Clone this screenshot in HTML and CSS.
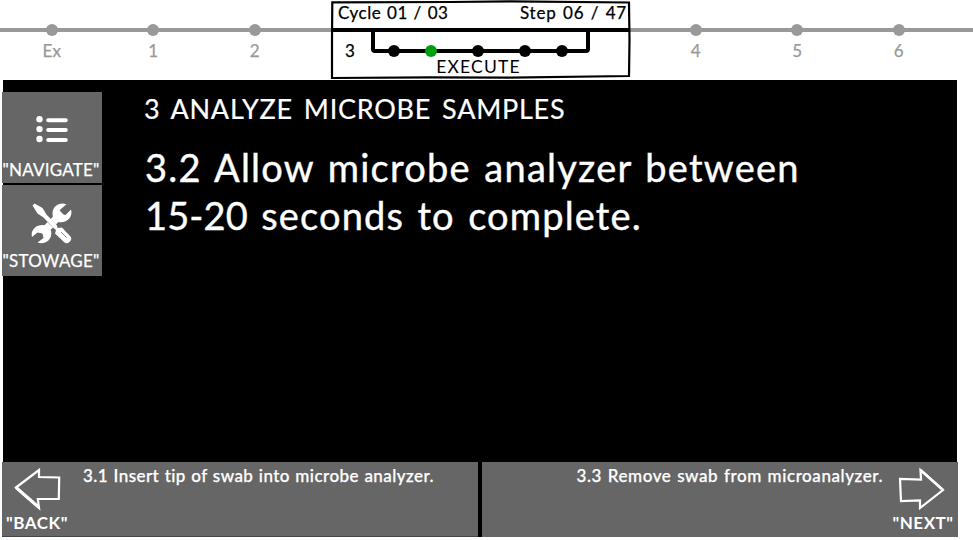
FILE: index.html
```html
<!DOCTYPE html>
<html lang="en">
<head>
<meta charset="utf-8">
<title>Analyze Microbe Samples</title>
<link rel="stylesheet" href="styles.css">
</head>
<body>
<header class="timeline">
  <ol class="steps steps-before">
    <li class="step"><i class="dot"></i><span>Ex</span></li>
    <li class="step"><i class="dot"></i><span>1</span></li>
    <li class="step"><i class="dot"></i><span>2</span></li>
  </ol>
  <section class="current">
    <svg class="sketch" viewBox="0 0 302 80" aria-hidden="true">
      <path d="M2.300 2.300L120 2L180 1.300L299 2.500L299.500 40L299 76L180 77.600L100 77.300L2 78L2 40Z" fill="#fff" stroke="#000" stroke-width="2.2"/>
      <path d="M2 30H299" stroke="#000" stroke-width="4"/>
      <path d="M43 30V49Q43 51 45 51H256Q258 51 258 49V30" fill="none" stroke="#000" stroke-width="4"/>
      <circle cx="64" cy="51" r="6"/>
      <circle cx="101" cy="51" r="6" fill="#009e0f"/>
      <circle cx="148" cy="51" r="6"/>
      <circle cx="195" cy="51" r="6"/>
      <circle cx="232" cy="51" r="6"/>
    </svg>
    <div class="counts"><span class="cycle">Cycle 01 / 03</span><span class="count">Step 06 / 47</span></div>
    <div class="number">3</div>
    <div class="phase"><span>EXECUTE</span></div>
  </section>
  <ol class="steps steps-after">
    <li class="step"><i class="dot"></i><span>4</span></li>
    <li class="step"><i class="dot"></i><span>5</span></li>
    <li class="step"><i class="dot"></i><span>6</span></li>
  </ol>
</header>
<main class="screen">
  <nav class="tools">
    <button class="tool">
      <svg class="tool-icon" viewBox="0 0 48 48" aria-hidden="true">
        <g fill="#fff"><circle cx="11.500" cy="15.200" r="3.200"/><circle cx="11.500" cy="25.100" r="3.200"/><circle cx="11.500" cy="35" r="3.200"/></g>
        <path d="M20.200 16.200H37.800M20.200 26.100H37.800M20.200 36H37.800" stroke="#fff" stroke-width="4" stroke-linecap="round"/>
      </svg>
      <span class="navigate">"NAVIGATE"</span>
    </button>
    <button class="tool">
      <svg class="tool-icon" viewBox="0 0 48 48" aria-hidden="true">
        <path d="M14 36L34 16" stroke="#fff" stroke-width="7.500"/>
        <path d="M38.500 7.200C30 4.500 22.500 11 25 20L30 25C38 27 45.500 20 43 12.500L37.500 18L32 17L31.800 13Z" fill="#fff"/>
        <path d="M9.500 45.500C17.500 48.500 25 42 23 33.500L18 28.500C10 26 2 32 4 40L9.500 35.500L14.500 36.500L15.500 41Z" fill="#fff"/>
        <path d="M12 14.500L26 28.500" stroke="#666" stroke-width="4.500"/>
        <path d="M4.500 8.500L6.500 6.500L14.500 11L18.500 17.500L29 28.500L29.500 31L34 30.500L42.500 39.500Q44.500 42 41.500 45Q38.500 47.500 36 45L27 36.500L28 33L25.500 31L15.500 20.500L9.500 16.500Z" fill="#fff"/>
        <path d="M33 35L38.500 40.500" stroke="#666" stroke-width=".8"/>
      </svg>
      <span class="stowage">"STOWAGE"</span>
    </button>
  </nav>
  <article class="procedure">
    <h1>3 ANALYZE MICROBE SAMPLES</h1>
    <p>3.2 Allow microbe analyzer between<br><span class="line-two"><span class="range">15-20</span> seconds to complete.</span></p>
  </article>
</main>
<footer class="pager">
  <button class="page previous">
    <span class="control">
      <svg class="arrow" viewBox="0 0 50 44" aria-hidden="true"><path d="M4 20.500L27 3V10L47.200 10.500L46.800 32L25.800 32L27 41Z" fill="none" stroke="#fff" stroke-width="2.200"/><path d="M4 20.500L26.500 40" stroke="#fff" stroke-width="3"/></svg>
      <strong class="back">"BACK"</strong>
    </span>
    <span class="summary">3.1 Insert tip of swab into microbe analyzer.</span>
  </button>
  <button class="page next">
    <span class="summary">3.3 Remove swab from microanalyzer.</span>
    <span class="control">
      <svg class="arrow" viewBox="0 0 50 44" aria-hidden="true"><path d="M45 23L22.500 3L23 12.500L2 12L3 34L22 33.500V41Z" fill="none" stroke="#fff" stroke-width="2.200"/><path d="M22.500 3L45 23" stroke="#fff" stroke-width="2.700"/></svg>
      <strong class="forward">"NEXT"</strong>
    </span>
  </button>
</footer>
</body>
</html>
```
FILE: styles.css
```css
* { box-sizing: border-box; }
body { margin: 0; width: 973px; height: 540px; overflow: hidden; background: #fff; font-family: Lato, "Open Sans", sans-serif; font-size: 17px; line-height: 20px; white-space: nowrap; font-variant-ligatures: none; -webkit-text-stroke: 0.25px currentColor; }
button { border: 0; padding: 0; margin: 0; color: #fff; font: inherit; background: #666; }

.timeline { display: grid; grid-template-columns: 330px 302px 341px; height: 80px; background: linear-gradient(#999, #999) 0 28px / 100% 4px no-repeat; }
.steps { display: grid; grid-template-columns: repeat(3, 101.5px); align-content: start; list-style: none; margin: 0; padding: 24px 0 0 1px; color: #999; }
.steps-after { padding-left: 13px; }
.step { display: flex; flex-direction: column; align-items: center; gap: 5px; }
.dot { width: 12px; height: 12px; border-radius: 50%; background: #999; }

.current { display: grid; grid-template: 26px 34px 20px / 1fr; }
.sketch { grid-area: 1 / 1 / 4 / 2; width: 302px; height: 80px; }
.counts { grid-area: 1 / 1; display: flex; justify-content: space-between; padding: 3px 5px 0 8px; }
.cycle { letter-spacing: 0.5px; word-spacing: 1px; }
.count { letter-spacing: 0.8px; word-spacing: 1.300px; }
.number { grid-area: 2 / 1; padding: 15px 0 0 15px; }
.phase { grid-area: 3 / 1; text-align: center; line-height: 14px; margin-right: 5px; font-size: 17.500px; letter-spacing: 1.2px; -webkit-text-stroke-width: 0; }

.screen { display: flex; width: 954px; height: 382px; margin-left: 3px; background: #000; }
.tools { display: flex; flex-direction: column; gap: 2px; width: 100px; margin: 12px 0 0 -1px; }
.tool { display: flex; flex-direction: column; align-items: center; width: 100px; height: 91px; padding-top: 12px; }
.tool-icon { width: 48px; height: 48px; flex: none; }
.tool span { margin: 8px 2px 0 0; letter-spacing: 0.2px; }
.tool .stowage { margin-top: 6px; }

.procedure { padding-left: 43px; color: #fff; -webkit-text-stroke-width: 0.4px; }
.procedure h1 { margin: 12px 0 0 -1px; font-size: 27px; font-weight: 400; line-height: 34px; letter-spacing: 0.75px; word-spacing: 3.300px; -webkit-text-stroke-width: 0.2px; }
.procedure p { margin: 17px 0 0; font-size: 38px; line-height: 48px; letter-spacing: 1.25px; word-spacing: 2.500px; }
.line-two { letter-spacing: 1.15px; }
.range { letter-spacing: 0.1px; }

.pager { display: grid; grid-template-columns: 476px 476px; column-gap: 4px; width: 956px; height: 75px; margin-left: 2px; background: #000; }
.page { display: flex; align-items: flex-start; text-align: left; border-bottom: 1px solid #444; }
.next { justify-content: flex-end; border-color: #666; }
.control { display: flex; flex-direction: column; align-items: center; width: 70px; padding-top: 5px; }
.arrow { width: 50px; height: 44px; }
.control strong { margin-top: 2px; letter-spacing: 0.5px; -webkit-text-stroke-width: 0; }
.summary { padding-top: 4px; font-weight: 500; }
.previous .summary { margin-left: 11px; letter-spacing: 0.45px; word-spacing: 0.700px; }
.next .summary { margin-right: 5px; letter-spacing: 0.57px; word-spacing: 0.900px; }
```
